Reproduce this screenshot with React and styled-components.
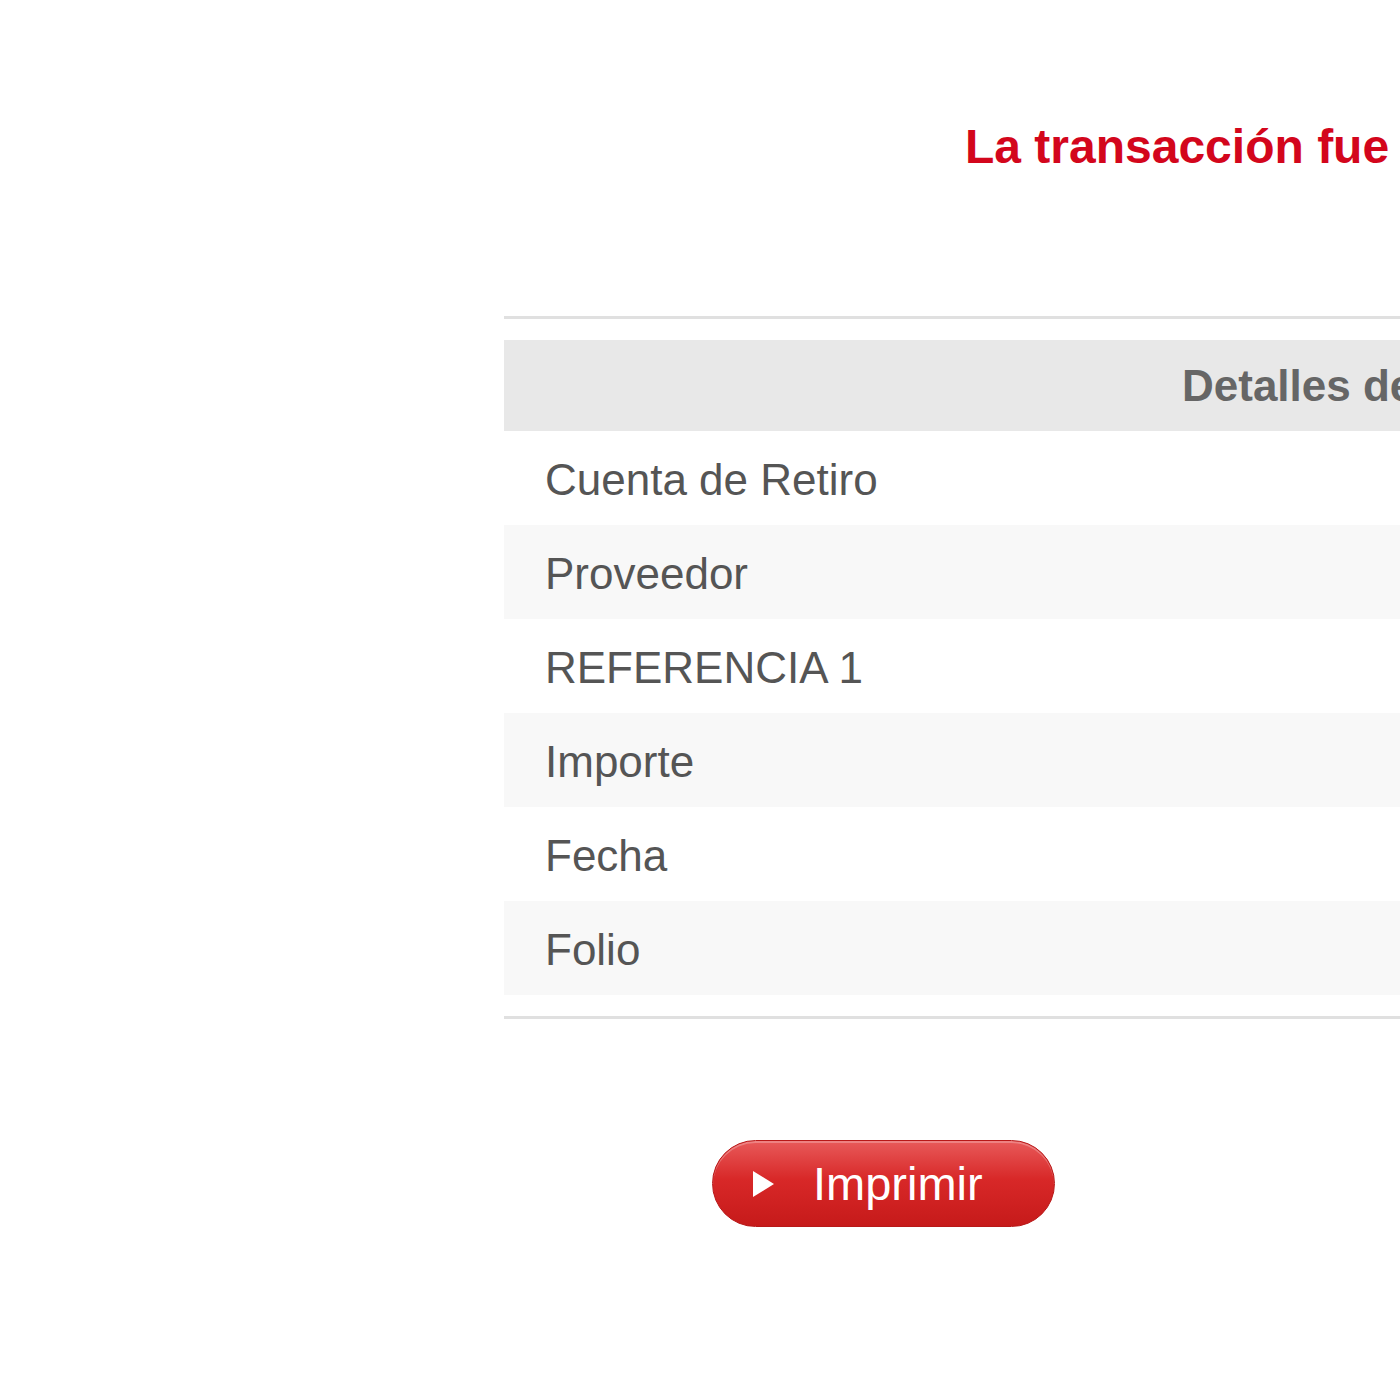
import React from "react";
import styled, { createGlobalStyle } from "styled-components";

const GlobalStyle = createGlobalStyle`
  html, body {
    margin: 0;
    padding: 0;
    background: #ffffff;
    overflow: hidden;
  }
  body {
    font-family: "Liberation Sans", Arial, Helvetica, sans-serif;
  }
`;

const Page = styled.main`
  width: 1400px;
  height: 1400px;
  overflow: hidden;
  padding: 123px 0 0 504px;
  box-sizing: border-box;
`;

const Content = styled.div`
  width: 1840px;
`;

const Title = styled.h1`
  margin: 0 0 145px 461px;
  font-size: 48px;
  line-height: 48px;
  font-weight: bold;
  color: #d3061c;
  white-space: nowrap;
`;

const Rule = styled.hr`
  margin: 0;
  border: 0;
  height: 3px;
  background: #e0e0e0;
`;

const Table = styled.table`
  width: 100%;
  border-collapse: collapse;
  margin: 21px 0;
`;

const HeadCell = styled.th`
  height: 91px;
  padding: 0 0 0 678px;
  background: #e8e8e8;
  color: #666666;
  font-size: 44px;
  font-weight: bold;
  text-align: left;
  white-space: nowrap;
`;

const Row = styled.tr`
  background: ${({ $shaded }) => ($shaded ? "#f8f8f8" : "#ffffff")};
`;

const Label = styled.td`
  height: 94px;
  padding: 4px 0 0 41px;
  box-sizing: border-box;
  font-size: 44px;
  color: #555555;
  white-space: nowrap;
`;

const Actions = styled.div`
  padding: 121px 0 0 208px;
`;

const PrintButton = styled.button`
  display: flex;
  align-items: center;
  gap: 39px;
  width: 343px;
  height: 87px;
  padding: 0 0 0 40px;
  box-sizing: border-box;
  border: 1px solid #b81818;
  border-radius: 44px;
  background: linear-gradient(#e85a5a 0%, #d82828 45%, #c61a1a 100%);
  box-shadow: inset 0 2px 0 rgba(255, 255, 255, 0.25);
  color: #ffffff;
  font-family: "Liberation Sans", Arial, sans-serif;
  font-size: 47px;
  cursor: pointer;
`;

const Arrow = styled.span`
  width: 0;
  height: 0;
  border-top: 13px solid transparent;
  border-bottom: 13px solid transparent;
  border-left: 21px solid #ffffff;
`;

const rows = [
  "Cuenta de Retiro",
  "Proveedor",
  "REFERENCIA 1",
  "Importe",
  "Fecha",
  "Folio",
];

export default function App() {
  return (
    <>
      <GlobalStyle />
      <Page>
        <Content>
          <Title>La transacción fue</Title>
          <Rule />
          <Table>
            <thead>
              <tr>
                <HeadCell colSpan={2}>Detalles de</HeadCell>
              </tr>
            </thead>
            <tbody>
              {rows.map((label, i) => (
                <Row key={label} $shaded={i % 2 === 1}>
                  <Label>{label}</Label>
                  <td />
                </Row>
              ))}
            </tbody>
          </Table>
          <Rule />
        </Content>
        <Actions>
          <PrintButton>
            <Arrow />
            Imprimir
          </PrintButton>
        </Actions>
      </Page>
    </>
  );
}
